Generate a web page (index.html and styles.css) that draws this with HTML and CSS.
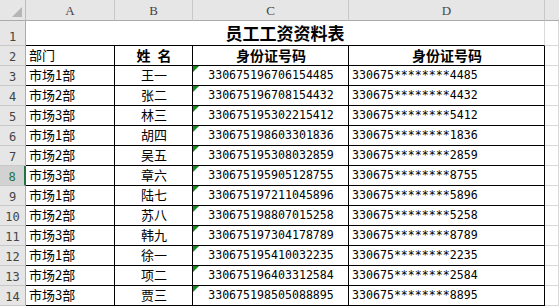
FILE: index.html
```html
<!DOCTYPE html>
<html lang="zh-CN">
<head>
<meta charset="utf-8">
<title>员工工资资料表</title>
<link rel="stylesheet" href="styles.css">
</head>
<body>
<div class="sheet">
  <div class="hd corner"></div>
  <div class="hd col">A</div>
  <div class="hd col">B</div>
  <div class="hd col">C</div>
  <div class="hd col">D</div>
  <div class="hd col last"></div>

  <div class="hd row">1</div>
  <div class="c title">员工工资资料表</div>
  <div class="c"></div>

  <div class="hd row">2</div>
  <div class="c t left">部门</div>
  <div class="c t center bold">姓&ensp;名</div>
  <div class="c t center bold">身份证号码</div>
  <div class="c t center bold">身份证号码</div>
  <div class="c"></div>

  <div class="hd row">3</div>
  <div class="c t left">市场1部</div>
  <div class="c t center">王一</div>
  <div class="c t center num flag">330675196706154485</div>
  <div class="c t left num">330675********4485</div>
  <div class="c"></div>

  <div class="hd row">4</div>
  <div class="c t left">市场2部</div>
  <div class="c t center">张二</div>
  <div class="c t center num flag">330675196708154432</div>
  <div class="c t left num">330675********4432</div>
  <div class="c"></div>

  <div class="hd row">5</div>
  <div class="c t left">市场3部</div>
  <div class="c t center">林三</div>
  <div class="c t center num flag">330675195302215412</div>
  <div class="c t left num">330675********5412</div>
  <div class="c"></div>

  <div class="hd row">6</div>
  <div class="c t left">市场1部</div>
  <div class="c t center">胡四</div>
  <div class="c t center num flag">330675198603301836</div>
  <div class="c t left num">330675********1836</div>
  <div class="c"></div>

  <div class="hd row">7</div>
  <div class="c t left">市场2部</div>
  <div class="c t center">吴五</div>
  <div class="c t center num flag">330675195308032859</div>
  <div class="c t left num">330675********2859</div>
  <div class="c"></div>

  <div class="hd row active">8</div>
  <div class="c t left">市场3部</div>
  <div class="c t center">章六</div>
  <div class="c t center num flag">330675195905128755</div>
  <div class="c t left num">330675********8755</div>
  <div class="c"></div>

  <div class="hd row">9</div>
  <div class="c t left">市场1部</div>
  <div class="c t center">陆七</div>
  <div class="c t center num flag">330675197211045896</div>
  <div class="c t left num">330675********5896</div>
  <div class="c"></div>

  <div class="hd row">10</div>
  <div class="c t left">市场2部</div>
  <div class="c t center">苏八</div>
  <div class="c t center num flag">330675198807015258</div>
  <div class="c t left num">330675********5258</div>
  <div class="c"></div>

  <div class="hd row">11</div>
  <div class="c t left">市场3部</div>
  <div class="c t center">韩九</div>
  <div class="c t center num flag">330675197304178789</div>
  <div class="c t left num">330675********8789</div>
  <div class="c"></div>

  <div class="hd row">12</div>
  <div class="c t left">市场1部</div>
  <div class="c t center">徐一</div>
  <div class="c t center num flag">330675195410032235</div>
  <div class="c t left num">330675********2235</div>
  <div class="c"></div>

  <div class="hd row">13</div>
  <div class="c t left">市场2部</div>
  <div class="c t center">项二</div>
  <div class="c t center num flag">330675196403312584</div>
  <div class="c t left num">330675********2584</div>
  <div class="c"></div>

  <div class="hd row">14</div>
  <div class="c t left">市场3部</div>
  <div class="c t center">贾三</div>
  <div class="c t center num flag">330675198505088895</div>
  <div class="c t left num">330675********8895</div>
  <div class="c"></div>
</div>
</body>
</html>
```

FILE: styles.css
```css
html, body {
  margin: 0;
  padding: 0;
  background: #ffffff;
}

.sheet {
  display: grid;
  grid-template-columns: 26px 89px 78px 156px 196px 1fr;
  grid-template-rows: 21px 25px repeat(13, 20px);
  width: 559px;
  font-family: "Noto Sans CJK SC", sans-serif;
  color: #000;
}

.hd {
  box-sizing: border-box;
  background: #e6e6e6;
  color: #444;
  display: flex;
  justify-content: center;
  align-items: center;
}

.corner {
  position: relative;
  border-right: 1px solid #bdbdbd;
  border-bottom: 1px solid #ababab;
}

.corner::after {
  content: "";
  position: absolute;
  right: 3px;
  bottom: 3px;
  width: 10px;
  height: 10px;
  background: #b5b5b5;
  clip-path: polygon(100% 0, 100% 100%, 0 100%);
}

.col {
  border-right: 1px solid #c8c8c8;
  border-bottom: 1px solid #ababab;
  font-family: "Liberation Serif", serif;
  font-size: 13px;
  padding-top: 1px;
}

.col.last {
  border-right: none;
}

.row {
  border-right: 1px solid #ababab;
  border-bottom: 1px solid #c8c8c8;
  font-family: "DejaVu Sans Mono", monospace;
  font-size: 12px;
  align-items: flex-end;
  padding-bottom: 1px;
  line-height: 14px;
}

.row.active {
  background: #d2d2d2;
  color: #217346;
  border-right: 2px solid #217346;
}

.c {
  box-sizing: border-box;
  border-right: 1px solid #d9d9d9;
  border-bottom: 1px solid #d9d9d9;
  display: flex;
  align-items: flex-end;
  padding: 0 2px 2px 3px;
  font-size: 13px;
  line-height: 16px;
  white-space: nowrap;
  overflow: hidden;
  position: relative;
}

.t {
  border-right-color: #000;
  border-bottom-color: #000;
}

.left {
  justify-content: flex-start;
}

.center {
  justify-content: center;
}

.bold {
  font-weight: bold;
  font-size: 14px;
}

.title {
  grid-column: 2 / 6;
  justify-content: center;
  align-items: center;
  font-weight: bold;
  font-size: 17px;
  line-height: 22px;
  padding: 0 0 1px 0;
  overflow: visible;
  border-bottom-color: #000;
}

.num {
  font-family: "DejaVu Sans Mono", monospace;
  font-size: 11.6px;
  padding-bottom: 3px;
  line-height: 13px;
}

.flag::before {
  content: "";
  position: absolute;
  left: 0;
  top: 0;
  width: 6px;
  height: 6px;
  background: #138a13;
  clip-path: polygon(0 0, 100% 0, 0 100%);
}
```
